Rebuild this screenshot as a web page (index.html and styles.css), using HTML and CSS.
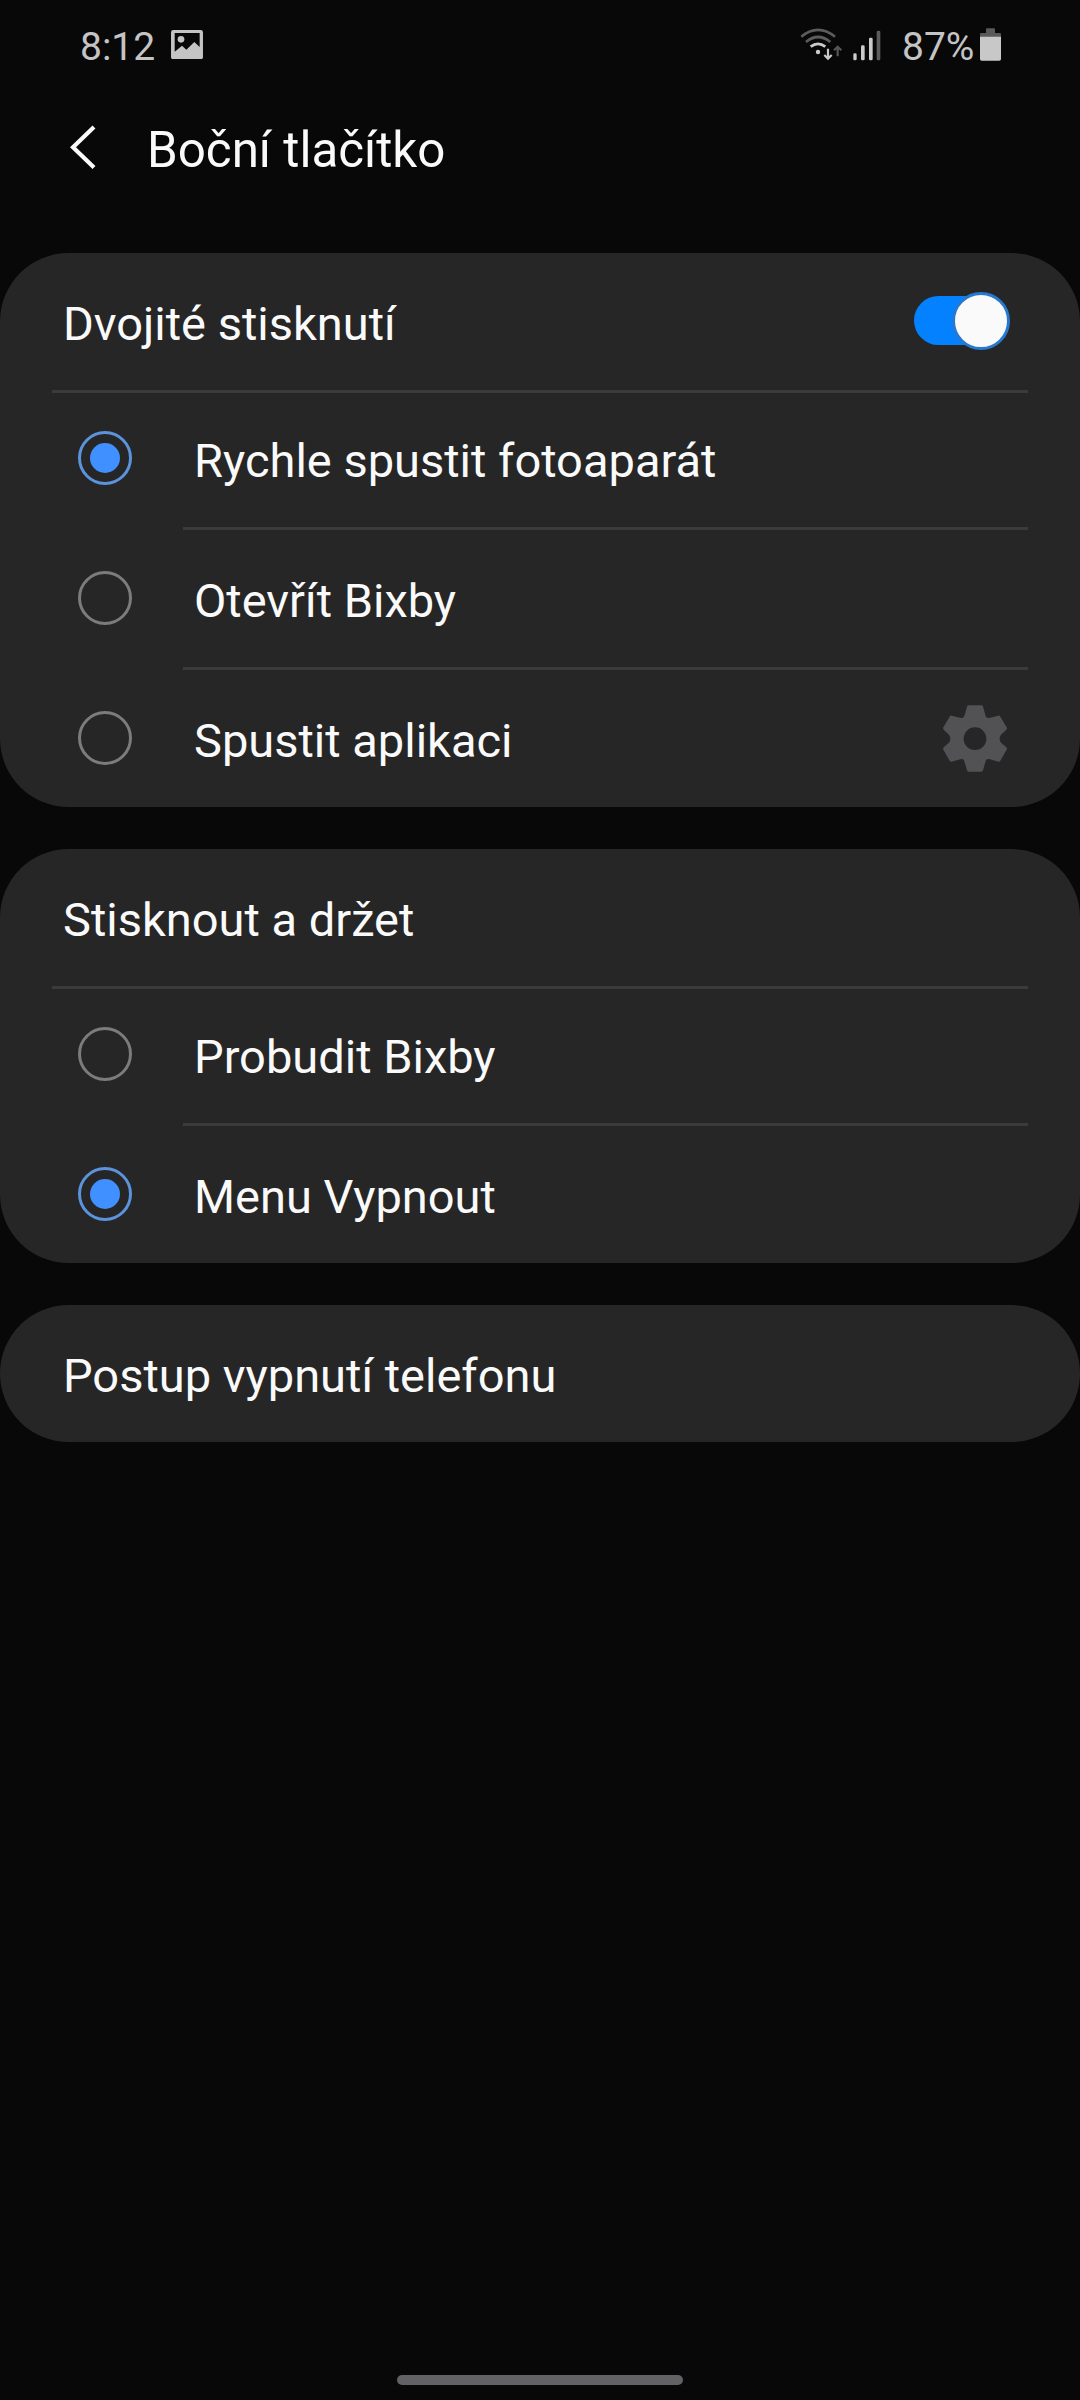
FILE: index.html
```html
<!DOCTYPE html>
<html lang="cs">
<head>
<meta charset="utf-8">
<title>Boční tlačítko</title>
<link rel="stylesheet" href="styles.css">
</head>
<body>
<div class="screen">
  <div class="status">
    <span class="clock">8:12</span>
    <svg class="picture" viewBox="0 0 96 88" width="32" height="29.3">
      <path fill="#c4c4c4" fill-rule="evenodd" d="M7 0H89Q96 0 96 7V81Q96 88 89 88H7Q0 88 0 81V7Q0 0 7 0ZM11 9V65L33 47L46 59L70 36L86 51V9Z"/>
      <circle cx="30" cy="28" r="10" fill="#c4c4c4"/>
    </svg>
    <span class="spacer"></span>
    <svg class="wifi" viewBox="58 52 128 102" width="42.67" height="34" fill="none">
      <path d="M62 81Q112 40 163 81" stroke="#5c5c5c" stroke-width="8"/>
      <path d="M76 97Q112 67 149 97" stroke="#5c5c5c" stroke-width="8"/>
      <path d="M90 111Q112 94 134 111" stroke="#cbcbcb" stroke-width="8"/>
      <circle cx="112" cy="127" r="6.500" fill="#cbcbcb"/>
      <path d="M142 117V147M131 136L142 147L153 136" stroke="#cbcbcb" stroke-width="6.500"/>
      <path d="M171 140V111M160 122L171 111L182 122" stroke="#555" stroke-width="6.500"/>
    </svg>
    <svg class="signal" viewBox="218 60 84 93" width="28" height="31">
      <rect x="219" y="130" width="10" height="21" rx="4" fill="#cbcbcb"/>
      <rect x="242" y="106" width="11" height="45" rx="4" fill="#cbcbcb"/>
      <rect x="266" y="83" width="11" height="68" rx="4" fill="#cbcbcb"/>
      <rect x="289" y="62" width="11" height="89" rx="4" fill="#5c5c5c"/>
    </svg>
    <span class="percent">87%</span>
    <svg class="battery" viewBox="600 54 63 99" width="21" height="33">
      <path d="M600 81V73Q600 69 604 69H618V58Q618 55 621 55H642Q645 55 645 58V69H659Q663 69 663 73V81Z" fill="#5a5a5a"/>
      <path d="M600 80H663V147Q663 152 658 152H605Q600 152 600 147Z" fill="#c8c8c8"/>
    </svg>
  </div>

  <header class="appbar">
    <svg class="back" viewBox="0 0 26 44" width="26" height="44"><path d="M24 2L3 22.200L24 42.400" fill="none" stroke="#fafafa" stroke-width="4.200"/></svg>
    <h1 class="heading">Boční tlačítko</h1>
  </header>

  <main class="cards">
    <section class="card">
      <div class="title">
        <span class="label">Dvojité stisknutí</span>
        <span class="toggle"><span class="track"></span><span class="thumb"></span></span>
      </div>
      <div class="option wide"><span class="radio on"></span><span class="label">Rychle spustit fotoaparát</span></div>
      <div class="option"><span class="radio"></span><span class="label">Otevřít Bixby</span></div>
      <div class="option"><span class="radio"></span><span class="label">Spustit aplikaci</span>
        <svg class="gear" viewBox="189 193 192 201" width="64" height="67">
          <path fill="#525254" fill-rule="evenodd" d="M266 194H304Q308 194 309 198L317 226Q319 234 330 231L355 225Q359 224 361 228L380 260Q382 264 379 267L363 282Q355 294 363 306L379 320Q382 323 380 327L361 360Q359 364 355 363L330 356Q319 353 317 361L309 389Q308 393 304 393H266Q262 393 261 389L253 361Q251 353 240 356L215 363Q211 364 209 360L190 327Q188 323 191 320L207 306Q215 294 207 282L191 267Q188 264 190 260L209 228Q211 224 215 225L240 231Q251 234 253 226L261 198Q262 194 266 194ZM285 260A34 34 0 1 0 285 328A34 34 0 1 0 285 260Z"/>
        </svg>
      </div>
    </section>

    <section class="card">
      <div class="title"><span class="label">Stisknout a držet</span></div>
      <div class="option wide"><span class="radio"></span><span class="label">Probudit Bixby</span></div>
      <div class="option"><span class="radio on"></span><span class="label">Menu Vypnout</span></div>
    </section>

    <section class="card">
      <div class="title"><span class="label">Postup vypnutí telefonu</span></div>
    </section>
  </main>

  <div class="homebar"></div>
</div>
</body>
</html>
```

FILE: styles.css
```css
* { box-sizing: border-box; }
body {
  margin: 0;
  background: #080809;
  color: #fafafa;
  font-family: Roboto, "Noto Sans", sans-serif;
}
svg { display: block; flex: none; }
.screen {
  width: 1080px;
  height: 2400px;
  display: flex;
  flex-direction: column;
}

/* Status bar */
.status {
  height: 92px;
  padding: 0 79px 0 80px;
  display: flex;
  align-items: flex-start;
  color: #c4c4c4;
  font-size: 39px;
  line-height: 46px;
}
.clock, .percent { margin-top: 24px; white-space: nowrap; }
.clock { width: 91px; }
.percent { width: 78px; }
.picture { margin-top: 30px; }
.spacer { flex: 1; }
.wifi { margin: 27px 10px 0 0; }
.signal { margin: 30px 21px 0 0; }
.battery { margin-top: 28px; }

/* App bar */
.appbar {
  height: 161px;
  padding: 34px 0 0 70px;
  display: flex;
  align-items: flex-start;
}
.back { margin-top: -1px; }
.heading {
  margin: -5px 0 0 51px;
  font-size: 49.3px;
  font-weight: 400;
  line-height: 58px;
}

/* Cards */
.cards {
  flex: 1;
  display: flex;
  flex-direction: column;
  gap: 42px;
}
.card {
  background: #262627;
  border-radius: 68.5px;
}
.label {
  font-size: 47px;
  line-height: 56px;
  white-space: nowrap;
}
.title {
  height: 137px;
  padding: 4px 70px 0 63px;
  display: flex;
  align-items: center;
  justify-content: space-between;
}
.title:not(:last-child) { margin-bottom: -3px; }
.option {
  height: 140px;
  display: flex;
  align-items: center;
  padding: 2px 73px 0 78px;
  background: linear-gradient(#3b3b3d, #3b3b3d) 183px 0 / 845px 3px no-repeat;
}
.option.wide {
  background-position: 52px 3px;
  background-size: 976px 3px;
}
.option .label { flex: 1; padding-top: 5px; }
.radio {
  width: 54px;
  height: 54px;
  margin-right: 62px;
  border: 3px solid #7c7c7e;
  border-radius: 50%;
  display: grid;
  place-items: center;
}
.radio.on { border-color: #5b93dd; }
.radio.on::after {
  content: "";
  width: 30px;
  height: 30px;
  border-radius: 50%;
  background: #4190ff;
}
.toggle {
  width: 96px;
  height: 58px;
  margin-top: -6px;
  display: grid;
  align-items: center;
}
.track, .thumb { grid-area: 1 / 1; }
.track {
  width: 92px;
  height: 49px;
  border-radius: 25px;
  background: #0381fe;
}
.thumb {
  justify-self: end;
  width: 58px;
  height: 58px;
  border: 3px solid #2779cf;
  border-radius: 50%;
  background: #fafafa;
}

.homebar {
  width: 286px;
  height: 10px;
  margin: 0 auto 15px;
  border-radius: 5px;
  background: #626264;
}
```
